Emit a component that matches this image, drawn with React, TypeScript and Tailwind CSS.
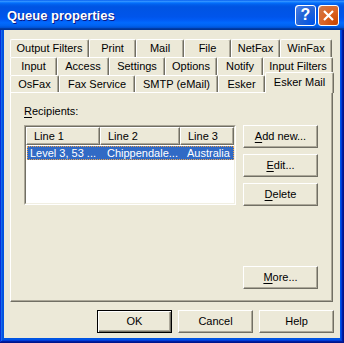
import React from "react";

const font = { fontFamily: '"Liberation Sans", Arial, sans-serif' };

// classic raised push button
function Btn({
  children,
  def,
}: {
  children: React.ReactNode;
  def?: boolean;
}) {
  return (
    <div
      className={
        def
          ? "w-[75px] h-[23px] flex items-center justify-center border border-black shadow-[inset_1px_1px_#fff,inset_-1px_-1px_#716f64,inset_-2px_-2px_#aca899] bg-[#ece9d8]"
          : "w-[75px] h-[23px] flex items-center justify-center border border-t-white border-l-white border-r-[#716f64] border-b-[#716f64] shadow-[inset_-1px_-1px_#aca899] bg-[#ece9d8]"
      }
    >
      {children}
    </div>
  );
}

function Tab({ label, w }: { label: string; w: string }) {
  return (
    <div
      className={`${w} h-full flex items-center justify-center border-t border-l border-r border-t-white border-l-white border-r-[#716f64] shadow-[inset_-1px_0_#aca899] rounded-tl-[2px] rounded-tr-[2px]`}
    >
      {label}
    </div>
  );
}

function HeadCell({ label, w }: { label: string; w: string }) {
  return (
    <div
      className={`${w} h-full flex items-center pl-[7px] border border-t-white border-l-white border-r-[#716f64] border-b-[#716f64] shadow-[inset_-1px_-1px_#aca899]`}
    >
      {label}
    </div>
  );
}

export default function App() {
  return (
    <div
      className="w-[344px] h-[343px] flex flex-col bg-[#0054e3] shadow-[inset_-1px_-1px_#00138c,inset_1px_1px_#0831d9,inset_-2px_-2px_#001ea0,inset_2px_2px_#166aee,inset_-3px_-3px_#003bda,inset_3px_3px_#0855dd] text-[11px] text-black overflow-hidden"
      style={font}
    >
      {/* title bar */}
      <div className="h-[30px] flex items-center pl-[7px] pr-[5px] bg-[linear-gradient(180deg,#0058ee_0%,#3593ff_4%,#288eff_6%,#127dff_8%,#036ffc_10%,#0262ee_14%,#0057e5_20%,#0054e3_24%,#0055eb_56%,#005bf5_66%,#026afe_76%,#0062ef_86%,#0052d6_92%,#0040ab_94%,#003092_100%)]">
        <span className="text-white font-bold text-[13px] pt-[1px] [text-shadow:1px_1px_#0a1883]">
          Queue properties
        </span>
        <div className="ml-auto flex gap-[2px]">
          <div className="w-[21px] h-[21px] rounded-[3px] border border-white flex items-center justify-center bg-[radial-gradient(circle_at_90%_90%,#0054e9_0%,#2263d5_55%,#4479e4_90%,#fff_100%)] text-white font-bold text-[16px] leading-none">
            ?
          </div>
          <div className="w-[21px] h-[21px] rounded-[3px] border border-white flex items-center justify-center bg-[radial-gradient(circle_at_90%_90%,#cc4600_0%,#dc6527_55%,#cd7546_90%,#fff_100%)]">
            <svg width="13" height="13" viewBox="0 0 13 13">
              <path d="M2 2 L11 11 M11 2 L2 11" stroke="#fff" strokeWidth="2.2" />
            </svg>
          </div>
        </div>
      </div>

      {/* body */}
      <div className="mx-[4px] h-[308px] bg-[#ece9d8] flex flex-col pt-[9px] pl-[6px] pr-[6px]">
        {/* tab rows */}
        <div className="h-[18px] flex">
          <Tab label="Output Filters" w="w-[79px]" />
          <Tab label="Print" w="w-[47px]" />
          <Tab label="Mail" w="w-[48px]" />
          <Tab label="File" w="w-[47px]" />
          <Tab label="NetFax" w="w-[49px]" />
          <Tab label="WinFax" w="w-[52px]" />
        </div>
        <div className="h-[18px] flex">
          <Tab label="Input" w="w-[47px]" />
          <Tab label="Access" w="w-[52px]" />
          <Tab label="Settings" w="w-[56px]" />
          <Tab label="Options" w="w-[52px]" />
          <Tab label="Notify" w="w-[46px]" />
          <Tab label="Input Filters" w="w-[70px]" />
        </div>
        <div className="h-[17px] flex items-end">
          <Tab label="OsFax" w="w-[49px]" />
          <Tab label="Fax Service" w="w-[76px]" />
          <Tab label="SMTP (eMail)" w="w-[83px]" />
          <Tab label="Esker" w="w-[47px]" />
          <div className="relative z-10 w-[69px] h-[21px] -mb-[1px] bg-[#ece9d8] flex items-center justify-center pb-[2px] border-t border-l border-r border-t-white border-l-white border-r-[#716f64] shadow-[inset_-1px_0_#aca899] rounded-tl-[2px] rounded-tr-[2px]">
            Esker Mail
          </div>
        </div>

        {/* tab panel */}
        <div className="w-[323px] h-[210px] flex flex-col border border-t-white border-l-white border-r-[#716f64] border-b-[#716f64] shadow-[inset_-1px_-1px_#aca899] pl-[13px] pr-[14px]">
          <div className="mt-[12px] h-[13px] leading-[13px]">
            <span className="underline underline-offset-2">R</span>ecipients:
          </div>
          <div className="mt-[7px] flex gap-[7px]">
            {/* list view */}
            <div className="w-[212px] h-[80px] border border-t-[#aca899] border-l-[#aca899] border-r-white border-b-white">
              <div className="w-full h-full bg-white border border-t-[#716f64] border-l-[#716f64] border-r-[#f1efe2] border-b-[#f1efe2] flex flex-col">
                <div className="h-[18px] flex bg-[#ece9d8]">
                  <HeadCell label="Line 1" w="w-[74px]" />
                  <HeadCell label="Line 2" w="w-[80px]" />
                  <HeadCell label="Line 3" w="w-[54px]" />
                </div>
                <div className="mt-[1px] ml-[1px] h-[14px] flex items-center bg-[#316ac5] text-white border border-dotted border-[#e8a04a]">
                  <div className="w-[72px] pl-[2px] whitespace-nowrap">Level 3, 53 ...</div>
                  <div className="w-[80px] pl-[7px] whitespace-nowrap">Chippendale...</div>
                  <div className="pl-[7px] whitespace-nowrap">Australia</div>
                </div>
              </div>
            </div>
            <div className="flex flex-col gap-[6px]">
              <Btn>
                <span>
                  <span className="underline underline-offset-2">A</span>dd new...
                </span>
              </Btn>
              <Btn>
                <span>
                  <span className="underline underline-offset-2">E</span>dit...
                </span>
              </Btn>
              <Btn>
                <span>
                  <span className="underline underline-offset-2">D</span>elete
                </span>
              </Btn>
            </div>
          </div>
          <div className="mt-auto mb-[12px] self-end">
            <Btn>
              <span>
                <span className="underline underline-offset-2">M</span>ore...
              </span>
            </Btn>
          </div>
        </div>

        {/* dialog buttons */}
        <div className="mt-[8px] flex justify-end gap-[6px]">
          <Btn def>OK</Btn>
          <Btn>Cancel</Btn>
          <Btn>Help</Btn>
        </div>
      </div>
    </div>
  );
}
